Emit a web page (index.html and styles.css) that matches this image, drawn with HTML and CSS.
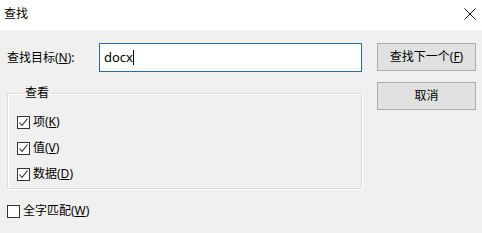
FILE: index.html
```html
<!DOCTYPE html>
<html lang="zh-CN">
<head>
  <meta charset="UTF-8">
  <title>查找</title>
  <link rel="stylesheet" href="styles.css">
</head>
<body>
  <!-- Title bar -->
  <div class="titlebar">
    <span class="title">查找</span>
    <svg class="close" width="12" height="12" viewBox="0 0 12 12">
      <path d="M0.5 0.5 L11.5 11.5 M11.5 0.5 L0.5 11.5" stroke="#111" stroke-width="1" fill="none"/>
    </svg>
  </div>

  <div class="dialog">
    <div class="left">
      <div class="find-row">
        <label class="find-label">查找目标(<u>N</u>):</label>
        <div class="find-input">docx<span class="caret"></span></div>
      </div>

      <fieldset class="group">
        <legend>查看</legend>
        <div class="check">
          <span class="box"><svg width="11" height="11" viewBox="0 0 11 11"><path d="M1.5 5.5 L4 8.5 L9.5 1.5" stroke="#222" stroke-width="1.1" fill="none"/></svg></span>项(<u>K</u>)
        </div>
        <div class="check">
          <span class="box"><svg width="11" height="11" viewBox="0 0 11 11"><path d="M1.5 5.5 L4 8.5 L9.5 1.5" stroke="#222" stroke-width="1.1" fill="none"/></svg></span>值(<u>V</u>)
        </div>
        <div class="check">
          <span class="box"><svg width="11" height="11" viewBox="0 0 11 11"><path d="M1.5 5.5 L4 8.5 L9.5 1.5" stroke="#222" stroke-width="1.1" fill="none"/></svg></span>数据(<u>D</u>)
        </div>
      </fieldset>

      <div class="check whole"><span class="box"></span>全字匹配(<u>W</u>)</div>
    </div>

    <div class="buttons">
      <button class="btn">查找下一个(<u>F</u>)</button>
      <button class="btn">取消</button>
    </div>
  </div>
</body>
</html>
```

FILE: styles.css
```css
* {
  margin: 0;
  padding: 0;
  box-sizing: border-box;
}

body {
  width: 482px;
  height: 233px;
  background: #f0f0f0;
  font-family: "Noto Sans", "Noto Sans CJK SC", sans-serif;
  font-size: 12px;
  color: #000;
  overflow: hidden;
}

/* Title bar */
.titlebar {
  height: 30px;
  background: #fff;
  display: flex;
  align-items: center;
  justify-content: space-between;
  padding: 0 4px 2px 4px;
}

.title {
  font-size: 12px;
  line-height: 14px;
}

.close {
  margin-right: 2px;
}

/* Dialog body */
.dialog {
  display: flex;
  padding: 13px 0 0 7px;
  gap: 15px;
}

.left {
  width: 355px;
}

.find-row {
  display: flex;
  align-items: center;
  height: 29px;
}

.find-label {
  width: 92px;
  line-height: 14px;
  padding-top: 1px;
}

.find-input {
  width: 263px;
  height: 29px;
  background: #fff;
  border: 1px solid #2b6b9e;
  padding: 0 0 0 4px;
  font-size: 13px;
  line-height: 27px;
  display: flex;
  align-items: center;
}

.caret {
  display: inline-block;
  width: 1px;
  height: 15px;
  background: #000;
}

/* Group box */
.group {
  margin-top: 14px;
  border: 1px solid #dcdcdc;
  box-shadow: inset 1px 1px 0 #fff, 1px 1px 0 #fff;
  padding: 9px 0 1px 9px;
  min-width: 0;
}

.group legend {
  margin-left: 6px;
  padding: 0 2px;
  line-height: 14px;
}

.check {
  display: flex;
  align-items: center;
  height: 26px;
  line-height: 14px;
}

.box {
  width: 13px;
  height: 13px;
  border: 1px solid #333;
  background: #fff;
  margin-right: 3px;
  display: flex;
}

.whole {
  margin-top: 9px;
}

/* Buttons */
.buttons {
  display: flex;
  flex-direction: column;
  gap: 11px;
}

.btn {
  width: 99px;
  height: 28px;
  background: #e1e1e1;
  border: 1px solid #adadad;
  font-family: inherit;
  font-size: 12px;
  color: #000;
  line-height: 14px;
}
```
